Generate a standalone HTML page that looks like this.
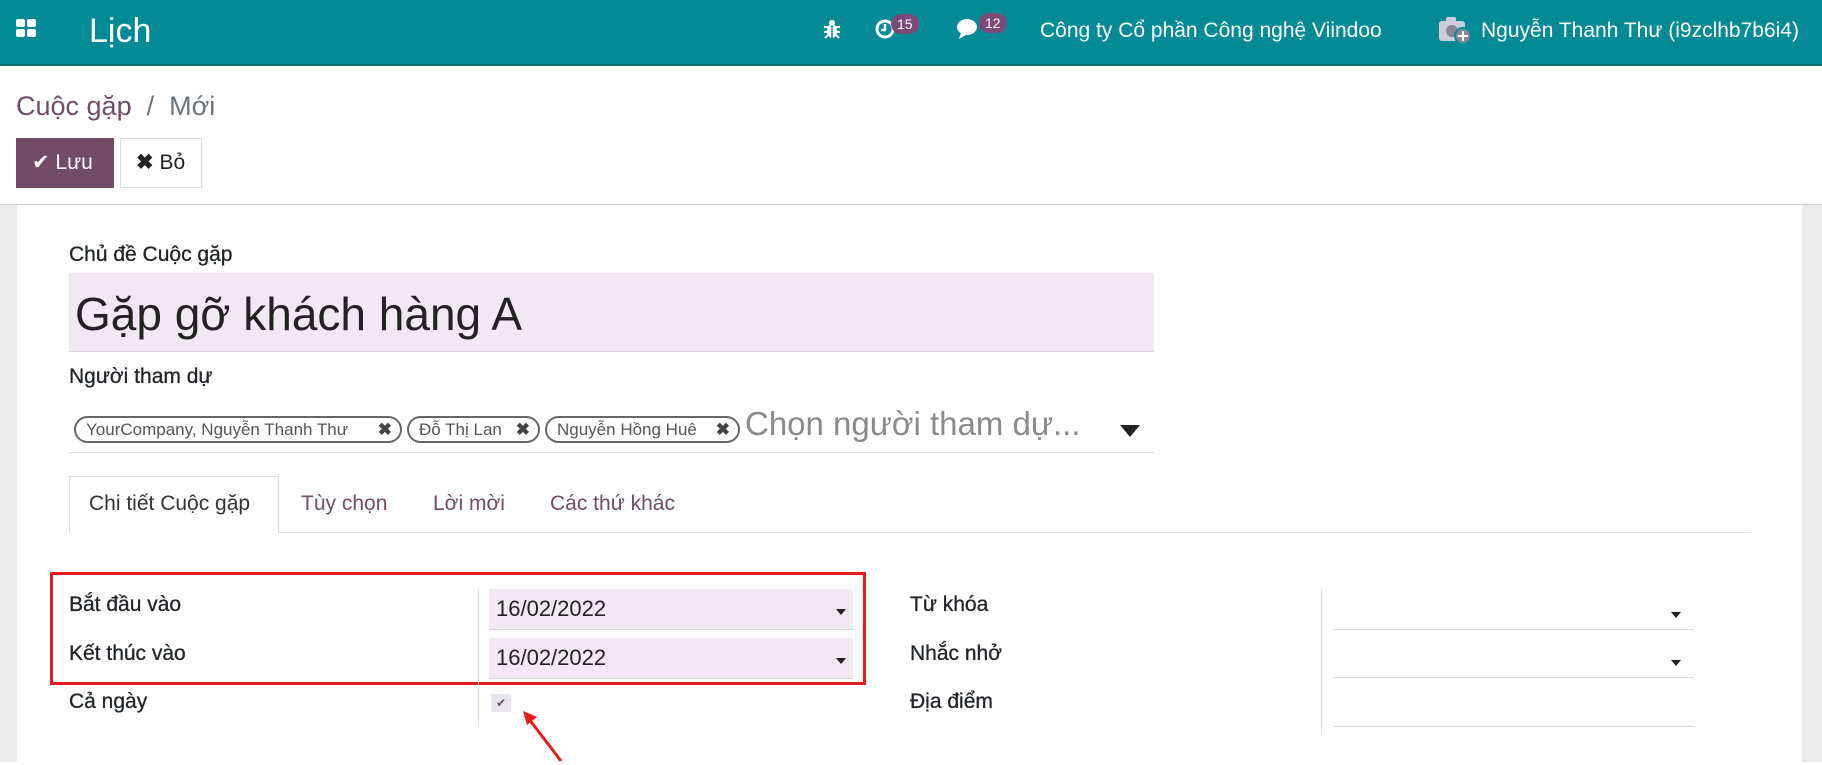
<!DOCTYPE html>
<html><head><meta charset="utf-8"><style>
*{box-sizing:border-box;margin:0;padding:0}
body{width:1822px;height:762px;overflow:hidden;background:#fff;font-family:"Liberation Sans","Noto Sans CJK SC",sans-serif;color:#212529;position:relative}
.a{position:absolute;white-space:nowrap}
.top{position:absolute;left:0;top:0;width:1822px;height:66px;background:#028a96;border-bottom:2px solid #016d75}
.w{color:#fff}
.badge{position:absolute;background:#7c4a7a;color:#fff;font-size:14px;border-radius:10px;height:20px;line-height:20px;padding:0 6px}
.lbl{font-size:21px;color:#212529;-webkit-text-stroke:0.3px #212529}
.tab{font-size:21px;color:#714b67}
.tag{position:absolute;top:416px;height:27px;border:2px solid #666;border-radius:14px;font-size:17px;color:#555;line-height:23px;padding-left:10px;overflow:hidden}
.tag b{position:absolute;right:8px;top:0;color:#444}
.inp{position:absolute;background:#f1e8f3;border-bottom:1px solid #d8d8d8}
.car{position:absolute;width:0;height:0;border-left:5px solid transparent;border-right:5px solid transparent;border-top:6px solid #222}
.line{position:absolute;height:1px;background:#ddd}
</style></head><body>
<div class="top"></div>
<svg class="a" style="left:16px;top:19px" width="22" height="20" viewBox="0 0 22 20"><rect x="0" y="0" width="9" height="8" rx="2" fill="#fff"/><rect x="11" y="0" width="9" height="8" rx="2" fill="#fff"/><rect x="0" y="10" width="9" height="8" rx="2" fill="#fff"/><rect x="11" y="10" width="9" height="8" rx="2" fill="#fff"/></svg>
<div class="a w" style="left:89px;top:12px;font-size:34px">Lịch</div>
<svg class="a" style="left:823px;top:19px" width="18" height="20" viewBox="0 0 18 20"><ellipse cx="9" cy="12" rx="5" ry="7" fill="#fff"/><circle cx="9" cy="4" r="3" fill="#fff"/><path d="M1 8h16M1 13h16M2 19l3-3M16 19l-3-3" stroke="#fff" stroke-width="2"/><path d="M9 6v13" stroke="#028a96" stroke-width="1.5"/></svg>
<svg class="a" style="left:874px;top:18px" width="22" height="22" viewBox="0 0 22 22"><circle cx="11" cy="11" r="8" fill="none" stroke="#fff" stroke-width="3"/><path d="M11 6v6h-4" stroke="#fff" stroke-width="2.5" fill="none"/></svg>
<div class="badge" style="left:891px;top:14px">15</div>
<svg class="a" style="left:956px;top:17px" width="26" height="24" viewBox="0 0 26 24"><ellipse cx="11" cy="10" rx="10" ry="8" fill="#fff"/><path d="M5 16l-2 6 7-4z" fill="#fff"/></svg>
<div class="badge" style="left:979px;top:13px">12</div>
<div class="a w" style="left:1040px;top:19px;font-size:21px">Công ty Cổ phần Công nghệ Viindoo</div>
<svg class="a" style="left:1438px;top:15px" width="34" height="30" viewBox="0 0 34 30"><rect x="1" y="6" width="26" height="20" rx="3" fill="#ccd"/><rect x="8" y="2" width="10" height="6" rx="2" fill="#ccd"/><circle cx="14" cy="16" r="6" fill="#889"/><circle cx="25" cy="21" r="8" fill="#889" stroke="#028a96" stroke-width="2"/><path d="M25 16v10M20 21h10" stroke="#fff" stroke-width="2"/></svg>
<div class="a w" style="left:1481px;top:19px;font-size:21px">Nguyễn Thanh Thư (i9zclhb7b6i4)</div>

<div class="a" style="left:16px;top:91px;font-size:27px;color:#714b67">Cuộc gặp <span style="color:#6c757d">&nbsp;/&nbsp; Mới</span></div>
<div class="a" style="left:16px;top:138px;width:98px;height:50px;background:#714b67;color:#fff;font-size:21px;line-height:50px;padding-left:16px">✔ Lưu</div>
<div class="a" style="left:120px;top:138px;width:82px;height:50px;border:1px solid #ddd;color:#222;font-size:21px;line-height:48px;padding-left:15px"><b>✖</b> Bỏ</div>
<div class="a" style="left:0;top:204px;width:1822px;height:1px;background:#ccc"></div>
<div class="a" style="left:0;top:205px;width:17px;height:557px;background:#ececec"></div>
<div class="a" style="left:1802px;top:205px;width:20px;height:557px;background:#ececec"></div>

<div class="a lbl" style="left:69px;top:243px">Chủ đề Cuộc gặp</div>
<div class="inp" style="left:69px;top:273px;width:1085px;height:79px"></div>
<div class="a" style="left:75px;top:287px;font-size:46px;color:#222">Gặp gỡ khách hàng A</div>
<div class="a lbl" style="left:69px;top:365px">Người tham dự</div>
<div class="tag" style="left:74px;width:328px">YourCompany, Nguyễn Thanh Thư<b>✖</b></div>
<div class="tag" style="left:407px;width:133px">Đỗ Thị Lan<b>✖</b></div>
<div class="tag" style="left:545px;width:195px">Nguyễn Hồng Huê<b>✖</b></div>
<div class="a" style="left:745px;top:405px;font-size:33px;color:#8a8a8a">Chọn người tham dự...</div>
<div class="car" style="left:1120px;top:425px;border-left-width:10px;border-right-width:10px;border-top-width:12px"></div>
<div class="line" style="left:69px;top:452px;width:1085px"></div>

<div class="a" style="left:69px;top:476px;width:210px;height:57px;border:1px solid #ddd;border-bottom:none;background:#fff;z-index:2"></div>
<div class="line" style="left:69px;top:532px;width:1682px"></div>
<div class="a tab" style="left:89px;top:492px;color:#333;z-index:3">Chi tiết Cuộc gặp</div>
<div class="a tab" style="left:301px;top:492px">Tùy chọn</div>
<div class="a tab" style="left:433px;top:492px">Lời mời</div>
<div class="a tab" style="left:550px;top:492px">Các thứ khác</div>

<div class="a" style="left:50px;top:572px;width:816px;height:113px;border:3px solid #e41c1c"></div>
<div class="a lbl" style="left:69px;top:593px">Bắt đầu vào</div>
<div class="a lbl" style="left:69px;top:642px">Kết thúc vào</div>
<div class="a lbl" style="left:69px;top:690px">Cả ngày</div>
<div class="a" style="left:478px;top:589px;width:1px;height:138px;background:#ddd"></div>
<div class="inp" style="left:489px;top:589px;width:364px;height:41px"></div>
<div class="inp" style="left:489px;top:638px;width:364px;height:41px"></div>
<div class="a" style="left:496px;top:596px;font-size:22px;color:#222">16/02/2022</div>
<div class="a" style="left:496px;top:645px;font-size:22px;color:#222">16/02/2022</div>
<div class="car" style="left:836px;top:609px"></div>
<div class="car" style="left:836px;top:658px"></div>
<div class="a" style="left:491px;top:694px;width:20px;height:18px;background:#e9e6ee;color:#714b67;font-size:12px;text-align:center;line-height:18px">✔</div>
<svg class="a" style="left:515px;top:705px" width="52" height="60" viewBox="0 0 52 60"><path d="M46 56L14 14" stroke="#e41c1c" stroke-width="3"/><path d="M8 6l14 6-10 8z" fill="#e41c1c"/></svg>

<div class="a lbl" style="left:910px;top:593px">Từ khóa</div>
<div class="a lbl" style="left:910px;top:642px">Nhắc nhở</div>
<div class="a lbl" style="left:910px;top:690px">Địa điểm</div>
<div class="a" style="left:1321px;top:589px;width:1px;height:146px;background:#ddd"></div>
<div class="line" style="left:1333px;top:629px;width:361px"></div>
<div class="line" style="left:1333px;top:677px;width:361px"></div>
<div class="line" style="left:1333px;top:726px;width:361px"></div>
<div class="car" style="left:1671px;top:612px"></div>
<div class="car" style="left:1671px;top:660px"></div>
</body></html>
